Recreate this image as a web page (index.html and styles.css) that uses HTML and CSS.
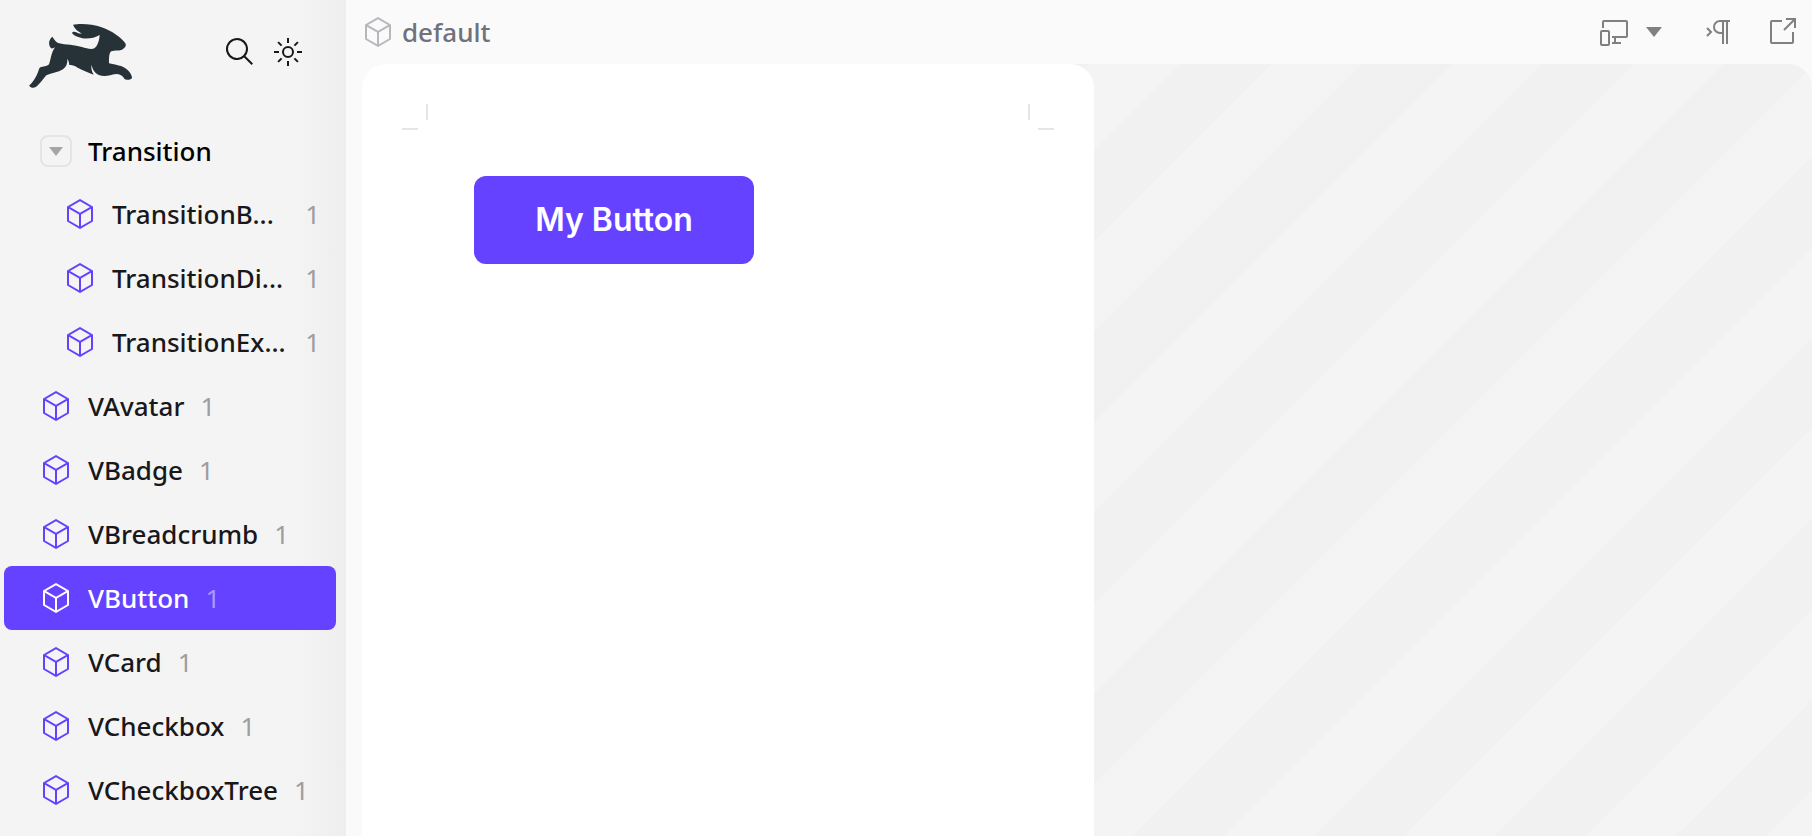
FILE: index.html
```html
<!DOCTYPE html>
<html lang="en">
<head>
    <meta charset="UTF-8">
    <meta name="viewport" content="width=device-width, initial-scale=1.0">
    <title>VButton</title>
    <link rel="stylesheet" href="styles.css">
</head>
<body>
    <!-- Shared icons -->
    <svg class="sprite" aria-hidden="true">
        <symbol id="cube" viewBox="0 0 32 32">
            <path fill="currentColor" d="m28.504 8.136-12-7a1 1 0 0 0-1.008 0l-12 7A1 1 0 0 0 3 9v14a1 1 0 0 0 .496.864l12 7a1 1 0 0 0 1.008 0l12-7A1 1 0 0 0 29 23V9a1 1 0 0 0-.496-.864zM16 3.158 26.016 9 16 14.842 5.984 9zM5 10.74l10 5.833V28.26L5 22.426zm12 17.52V16.574l10-5.833v11.685z"/>
        </symbol>
    </svg>

    <div class="app">
        <aside class="sidebar">
            <div class="sidebar-header">
                <a class="logo" href="#" aria-label="Home">
                    <svg viewBox="84 48 318 216" width="106" height="72">
                        <path fill="#263238" d="M219 74C240 70 276 71 305 82C336 93 363 112 376 130C380 137 375 145 366 149C355 153 343 150 334 154C328 158 327 168 327 190C345 195 368 196 382 209C391 217 396 227 396 233C394 240 378 241 373 236C369 227 359 222 348 222C335 224 326 228 313 228C292 227 278 215 275 194C272 205 276 215 281 224C263 216 247 211 233 203C223 196 215 195 208 195C207 187 205 181 202 177C203 190 199 201 189 208C174 217 155 219 139 226C131 235 125 245 117 252C111 260 104 264 96 263C91 262 88 259 88 256C96 250 104 238 110 226C116 214 116 205 121 202C128 199 141 200 147 193C152 183 152 160 165 142C159 144 157 148 153 144C145 136 145 119 157 110C162 117 166 125 174 129C198 135 224 134 246 141C258 145 275 149 283 145C294 138 298 119 299 105C281 116 255 119 237 112C225 108 218 103 216 99C218 94 224 94 229 97C235 101 240 101 246 101C235 95 224 87 219 74Z"/>
                    </svg>
                </a>
                <div class="tools">
                    <button class="icon-button" aria-label="Search">
                        <svg class="icon" viewBox="0 0 32 32"><path fill="currentColor" d="m29 27.586-7.552-7.552a11.018 11.018 0 1 0-1.414 1.414L27.586 29zM4 13a9 9 0 1 1 9 9 9.01 9.01 0 0 1-9-9z"/></svg>
                    </button>
                    <button class="icon-button" aria-label="Toggle dark mode">
                        <svg class="icon line" viewBox="0 0 32 32"><circle cx="16" cy="16" r="5"/><path d="M16 2v5M16 25v5M2 16h5M25 16h5M6.1 6.1l3.5 3.5M22.4 22.4l3.5 3.5M6.1 25.9l3.5-3.5M22.4 9.6l3.5-3.5"/></svg>
                    </button>
                </div>
            </div>

            <nav class="tree">
                <button class="folder">
                    <span class="toggle"><svg width="14" height="9" viewBox="0 0 14 9"><path fill="currentColor" d="M0 0h14L7 9z"/></svg></span>
                    Transition
                </button>
                <a class="story child" href="#"><svg class="icon"><use href="#cube"/></svg><span class="name">TransitionB...</span><span class="count">1</span></a>
                <a class="story child" href="#"><svg class="icon"><use href="#cube"/></svg><span class="name">TransitionDi...</span><span class="count">1</span></a>
                <a class="story child" href="#"><svg class="icon"><use href="#cube"/></svg><span class="name">TransitionEx...</span><span class="count">1</span></a>
                <a class="story" href="#"><svg class="icon"><use href="#cube"/></svg><span class="name">VAvatar</span><span class="count">1</span></a>
                <a class="story" href="#"><svg class="icon"><use href="#cube"/></svg><span class="name">VBadge</span><span class="count">1</span></a>
                <a class="story" href="#"><svg class="icon"><use href="#cube"/></svg><span class="name">VBreadcrumb</span><span class="count">1</span></a>
                <a class="story active" href="#"><svg class="icon"><use href="#cube"/></svg><span class="name">VButton</span><span class="count">1</span></a>
                <a class="story" href="#"><svg class="icon"><use href="#cube"/></svg><span class="name">VCard</span><span class="count">1</span></a>
                <a class="story" href="#"><svg class="icon"><use href="#cube"/></svg><span class="name">VCheckbox</span><span class="count">1</span></a>
                <a class="story" href="#"><svg class="icon"><use href="#cube"/></svg><span class="name">VCheckboxTree</span><span class="count">1</span></a>
            </nav>
        </aside>

        <main class="main">
            <header class="toolbar">
                <div class="variant">
                    <svg class="icon"><use href="#cube"/></svg>
                    <span>default</span>
                </div>
                <div class="actions">
                    <button class="icon-button" aria-label="Responsive size">
                        <svg class="icon line" viewBox="0 0 32 32"><rect x="3" y="15" width="8" height="14" rx="1"/><path d="M5 12V6a1 1 0 0 1 1-1h22a1 1 0 0 1 1 1v14a1 1 0 0 1-1 1H14M17 21v6M14 27h9"/></svg>
                        <svg width="18" height="10" viewBox="0 0 18 10"><path fill="currentColor" d="M0 0h16L8 10z"/></svg>
                    </button>
                    <button class="icon-button" aria-label="Text direction">
                        <svg class="icon line" viewBox="0 0 32 32"><path d="M7 12l4 4-4 4M30 5H20a6 6 0 0 0 0 12h3M23 5v23M27 5v23"/></svg>
                    </button>
                    <a class="icon-button" href="#" aria-label="Open in new tab">
                        <svg class="icon line" viewBox="0 0 32 32"><path d="M14 5H4a1 1 0 0 0-1 1v20a1 1 0 0 0 1 1h20a1 1 0 0 0 1-1V16M18 3h9v9M27 3L16 14"/></svg>
                    </a>
                </div>
            </header>

            <div class="stage">
                <div class="preview">
                    <div class="marks">
                        <svg width="26" height="26" viewBox="0 0 26 26"><path fill="currentColor" d="M24 0h2v16h-2zM0 24h16v2H0z"/></svg>
                        <svg width="26" height="26" viewBox="0 0 26 26"><path fill="currentColor" d="M0 0h2v16H0zM10 24h16v2H10z"/></svg>
                    </div>
                    <button class="v-button">My Button</button>
                </div>
            </div>
        </main>
    </div>
</body>
</html>
```
FILE: styles.css
```css
* {
    box-sizing: border-box;
}
body {
    margin: 0;
    font-family: "Noto Sans", sans-serif;
    font-size: 26px;
    line-height: 36px;
    color: #18181b;
    background: #fafafa;
}
button {
    font: inherit;
    color: inherit;
    background: none;
    border: none;
    padding: 0;
    cursor: pointer;
}
a {
    color: inherit;
    text-decoration: none;
}
svg {
    display: block;
    flex-shrink: 0;
}
.sprite {
    display: none;
}
.icon {
    width: 32px;
    height: 32px;
}
.line {
    fill: none;
    stroke: currentColor;
    stroke-width: 2;
}
.icon-button {
    display: flex;
    align-items: center;
    gap: 16px;
}
.app {
    display: flex;
    min-height: 100vh;
}

/* Sidebar */
.sidebar {
    flex: 0 0 346px;
    background: linear-gradient(to left, #eee, #f4f4f4 52px);
}
.sidebar-header {
    display: flex;
    justify-content: space-between;
    align-items: center;
    height: 104px;
    padding: 0 42px 0 28px;
}
.tools {
    display: flex;
    gap: 16px;
}
.tree {
    padding: 16px 10px 16px 4px;
}
.folder {
    display: flex;
    align-items: center;
    gap: 16px;
    width: 100%;
    height: 62px;
    padding-left: 36px;
    color: #000;
    font-weight: 500;
}
.toggle {
    display: flex;
    align-items: center;
    justify-content: center;
    width: 32px;
    height: 32px;
    border: 2px solid #e4e4e4;
    border-radius: 8px;
    color: #a6a6a6;
}
.story {
    display: flex;
    align-items: center;
    gap: 16px;
    height: 64px;
    padding: 0 16px 0 36px;
    border-radius: 8px;
}
.story .icon {
    color: #6542ff;
}
.name {
    font-weight: 500;
}
.child {
    padding-left: 60px;
}
.child .name {
    flex: 1;
}
.count {
    color: #9d9d9f;
}
.active {
    background: #6542ff;
    color: #fff;
}
.active .icon {
    color: #fff;
}
.active .count {
    color: #ac99ff;
}

/* Story view */
.main {
    flex: 1;
    display: flex;
    flex-direction: column;
    padding-left: 16px;
}
.toolbar {
    display: flex;
    justify-content: space-between;
    align-items: center;
    height: 64px;
    padding-right: 12px;
    color: #808080;
}
.variant {
    display: flex;
    align-items: center;
    gap: 8px;
    color: #71717a;
    font-weight: 500;
}
.variant .icon {
    color: #b8b8bc;
}
.actions {
    display: flex;
    gap: 36px;
}
.stage {
    flex: 1;
    display: flex;
    border-radius: 24px 24px 0 0;
    background: repeating-linear-gradient(135deg, #f1f1f1 0 3px, #f4f4f4 3px 67px, #f1f1f1 67px 128px);
}
.preview {
    width: 50.5%;
    padding: 40px;
    border-radius: 24px 24px 0 0;
    background: #fff;
}
.marks {
    display: flex;
    justify-content: space-between;
    color: #e5e5e5;
}
.v-button {
    min-width: 280px;
    margin: 46px 0 0 72px;
    padding: 24px 60px;
    border-radius: 12px;
    background: #6542ff;
    color: #fff;
    font: 600 32px/40px Inter, sans-serif;
}
```
